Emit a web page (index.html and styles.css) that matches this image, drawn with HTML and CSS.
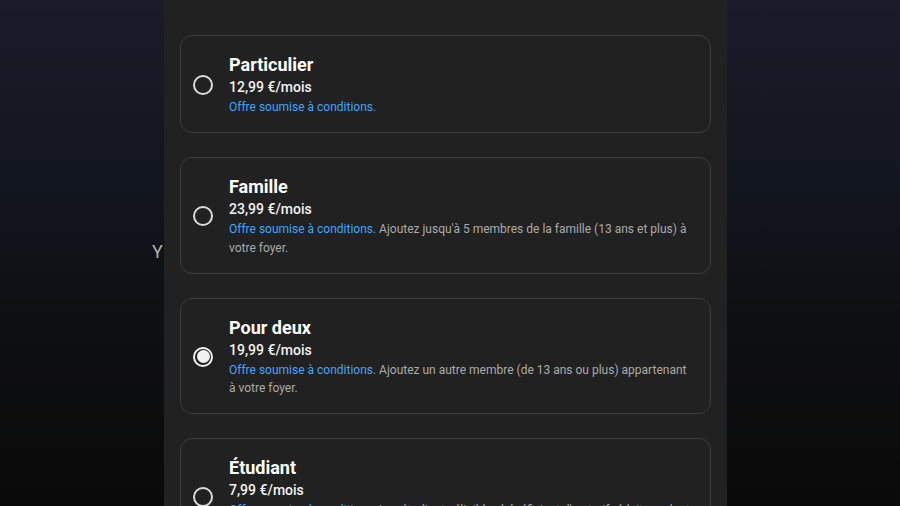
FILE: index.html
```html
<!DOCTYPE html>
<html lang="fr">
<head>
<meta charset="utf-8">
<title>Forfaits</title>
<link rel="stylesheet" href="styles.css">
</head>
<body>
<div class="page">
  <div class="backdrop-text">YouTube Premium</div>
</div>
<div class="dialog">
  <div class="plans">
    <label class="plan">
      <span class="radio"></span>
      <span class="info">
        <span class="name">Particulier</span>
        <span class="price">12,99 €/mois</span>
        <span class="desc"><span class="link">Offre soumise à conditions.</span></span>
      </span>
    </label>
    <label class="plan">
      <span class="radio"></span>
      <span class="info">
        <span class="name">Famille</span>
        <span class="price">23,99 €/mois</span>
        <span class="desc"><span class="link">Offre soumise à conditions.</span> Ajoutez jusqu'à 5 membres de la famille (13 ans et plus) à votre foyer.</span>
      </span>
    </label>
    <label class="plan">
      <span class="radio checked"><span class="dot"></span></span>
      <span class="info">
        <span class="name">Pour deux</span>
        <span class="price">19,99 €/mois</span>
        <span class="desc"><span class="link">Offre soumise à conditions.</span> Ajoutez un autre membre (de 13 ans ou plus) appartenant à votre foyer.</span>
      </span>
    </label>
    <label class="plan">
      <span class="radio"></span>
      <span class="info">
        <span class="name">Étudiant</span>
        <span class="price">7,99 €/mois</span>
        <span class="desc"><span class="link">Offre soumise à conditions.</span> Les étudiants éligibles bénéficient d'un tarif réduit pendant la durée de leurs études.</span>
      </span>
    </label>
  </div>
</div>
</body>
</html>
```
FILE: styles.css
```css
* { box-sizing: border-box; }
html, body {
  margin: 0;
  padding: 0;
  height: 100%;
  overflow: hidden;
}
body {
  font-family: Roboto, "Noto Sans", Arial, sans-serif;
  background: linear-gradient(180deg, #1b1b29 0%, #121620 35%, #0e0f11 65%, #0a0a0a 100%);
  color: #f1f1f1;
}
.page {
  height: 100%;
  display: flex;
  align-items: center;
  padding-left: 152px;
  padding-bottom: 4px;
}
.backdrop-text {
  font-size: 18px;
  letter-spacing: 2px;
  color: #b0b0b0;
  white-space: nowrap;
}
.dialog {
  position: fixed;
  top: 0;
  left: 164px;
  width: 563px;
  height: 100%;
  background: #212121;
  padding: 35px 16px 0 16px;
  overflow: hidden;
}
.plans {
  display: flex;
  flex-direction: column;
  gap: 24px;
}
.plan {
  display: flex;
  align-items: center;
  gap: 16px;
  border: 1px solid #3d3d3d;
  border-radius: 12px;
  padding: 17px 16px 15.5px 12px;
}
.radio {
  flex: none;
  width: 20px;
  height: 20px;
  border: 2px solid #dcdcdc;
  border-radius: 50%;
  display: flex;
  align-items: center;
  justify-content: center;
}
.radio.checked { border-color: #f1f1f1; }
.dot {
  width: 13px;
  height: 13px;
  border-radius: 50%;
  background: #f1f1f1;
}
.info {
  display: flex;
  flex-direction: column;
  min-width: 0;
  flex: 1;
}
.name {
  font-size: 18px;
  line-height: 24px;
  font-weight: 700;
  color: #ffffff;
}
.price {
  font-size: 14px;
  line-height: 21px;
  font-weight: 500;
  color: #f1f1f1;
}
.desc {
  font-size: 12px;
  line-height: 18.5px;
  color: #aaaaaa;
}
.link { color: #3ea6ff; }
```
